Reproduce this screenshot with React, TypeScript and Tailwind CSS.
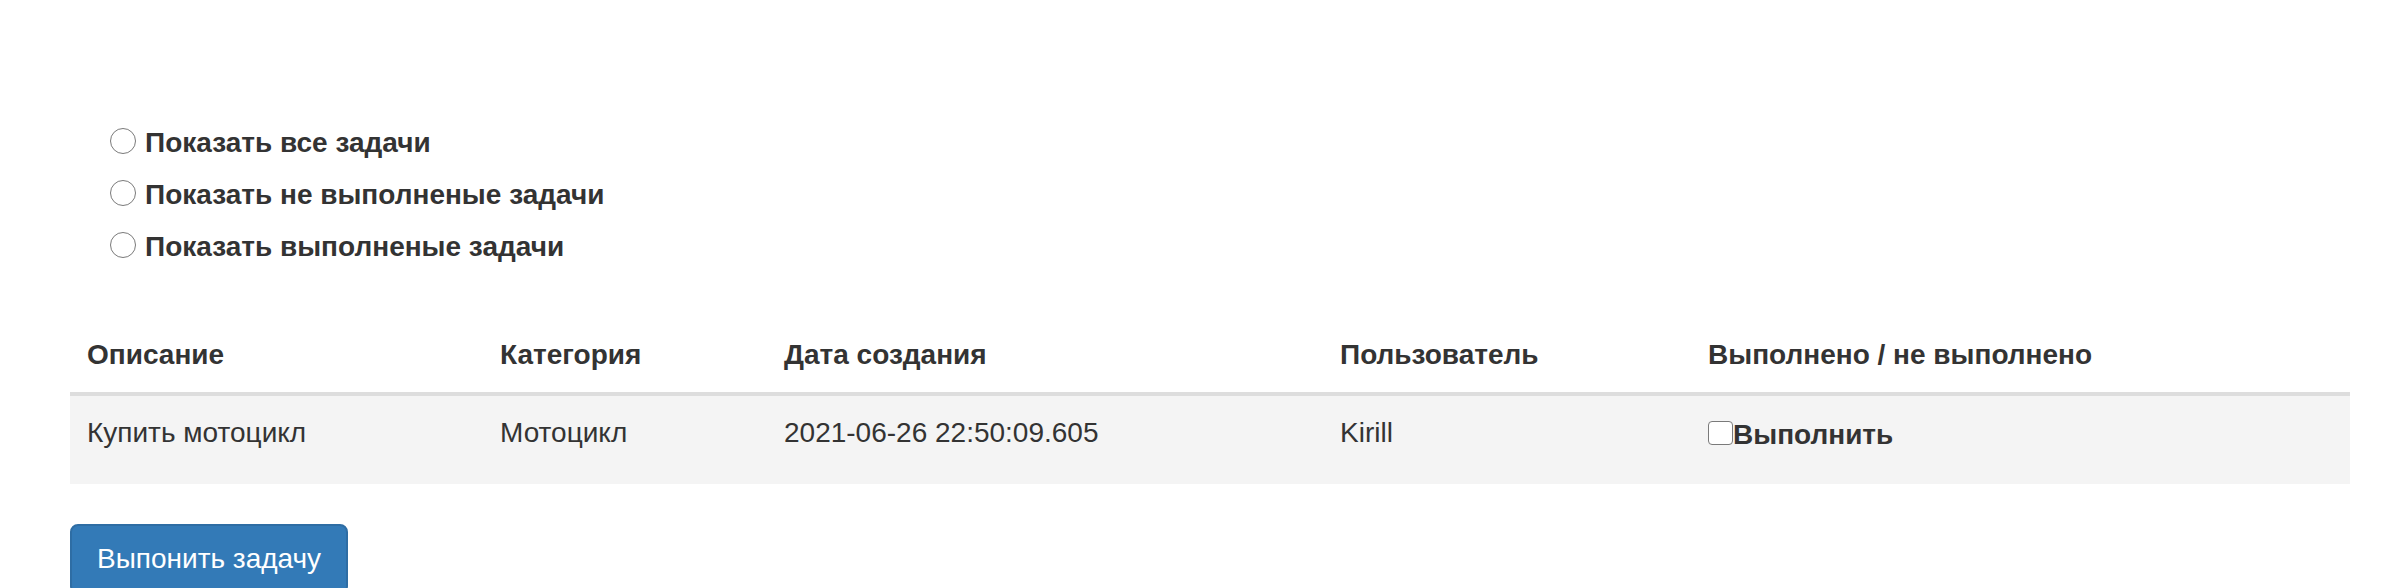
import React from "react";

const radios = [
  "Показать все задачи",
  "Показать не выполненые задачи",
  "Показать выполненые задачи",
];

const headers = [
  { label: "Описание", w: "w-[413px]" },
  { label: "Категория", w: "w-[284px]" },
  { label: "Дата создания", w: "w-[556px]" },
  { label: "Пользователь", w: "w-[368px]" },
  { label: "Выполнено / не выполнено", w: "w-[659px]" },
];

export default function App() {
  return (
    <div className="h-[588px] overflow-hidden bg-white text-[#333333] text-[28px] leading-[40px] font-['Liberation_Sans',Arial,sans-serif]">
      <div className="ml-[70px] w-[2280px] pt-[123px]">
        <div className="ml-[40px] flex flex-col gap-[12px]">
          {radios.map((r) => (
            <label key={r} className="flex items-start h-[40px] font-bold">
              <span className="mt-[5px] w-[26px] h-[26px] rounded-full border-[1.5px] border-[#7a7a7a] bg-white shrink-0" />
              <span className="ml-[9px]">{r}</span>
            </label>
          ))}
        </div>

        <table className="mt-[51px] w-[2280px] table-fixed border-collapse">
          <thead>
            <tr>
              {headers.map((h) => (
                <th
                  key={h.label}
                  className={`${h.w} text-left align-bottom font-bold px-[17px] pt-[17px] pb-[17px] border-b-[4px] border-[#dddddd]`}
                >
                  {h.label}
                </th>
              ))}
            </tr>
          </thead>
          <tbody>
            <tr className="bg-[#f4f4f4]">
              <td className="align-top px-[17px] pt-[17px] pb-[29px]">Купить мотоцикл</td>
              <td className="align-top px-[17px] pt-[17px] pb-[29px]">Мотоцикл</td>
              <td className="align-top px-[17px] pt-[17px] pb-[29px]">2021-06-26 22:50:09.605</td>
              <td className="align-top px-[17px] pt-[17px] pb-[29px]">Kirill</td>
              <td className="align-top px-[17px] pt-[17px] pb-[29px]">
                <label className="flex items-start font-bold">
                  <span className="mt-[8px] w-[25px] h-[24px] rounded-[4px] border-[1.5px] border-[#7a7a7a] bg-white shrink-0" />
                  <span className="mt-[2px]">Выполнить</span>
                </label>
              </td>
            </tr>
          </tbody>
        </table>

        <button className="mt-[40px] bg-[#337ab7] border-2 border-[#2e6da4] rounded-[8px] px-[25px] py-[13px] text-white text-[28px] leading-[40px] font-normal">
          Выпонить задачу
        </button>
      </div>
    </div>
  );
}
